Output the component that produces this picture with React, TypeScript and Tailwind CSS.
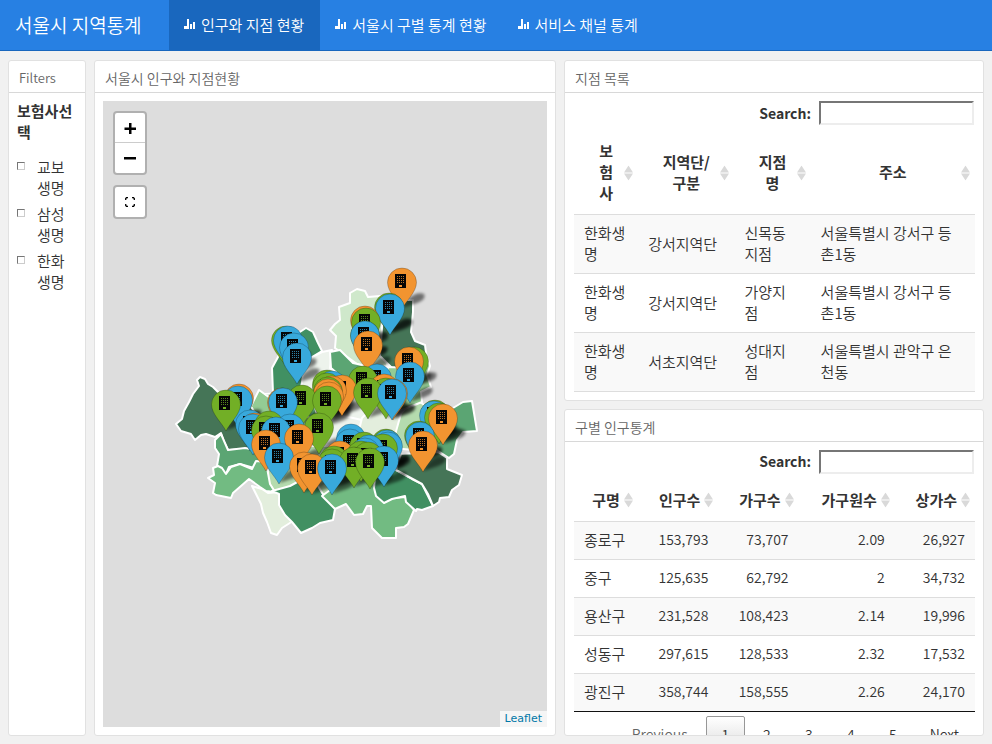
import type { ReactNode } from "react";

const FONT = "font-['Noto_Sans_CJK_KR',sans-serif]";

const navItems = [
  { label: "인구와 지점 현황", active: true },
  { label: "서울시 구별 통계 현황", active: false },
  { label: "서비스 채널 통계", active: false },
];

const insurers = ["교보생명", "삼성생명", "한화생명"];

const branches = [
  ["한화생명", "강서지역단", "신목동지점", "서울특별시 강서구 등촌1동"],
  ["한화생명", "강서지역단", "가양지점", "서울특별시 강서구 등촌1동"],
  ["한화생명", "서초지역단", "성대지점", "서울특별시 관악구 은천동"],
];

const population = [
  ["종로구", "153,793", "73,707", "2.09", "26,927"],
  ["중구", "125,635", "62,792", "2", "34,732"],
  ["용산구", "231,528", "108,423", "2.14", "19,996"],
  ["성동구", "297,615", "128,533", "2.32", "17,532"],
  ["광진구", "358,744", "158,555", "2.26", "24,170"],
];

const districts: [string, string][] = [
  ["#edf3ec", "320,415 340,400 365,418 360,440 335,448 315,440"],
  ["#edf3ec", "322,352 332,350 330,368 345,380 352,398 320,398 298,392 303,370 312,357"],
  ["#edf3ec", "312,400 355,392 380,404 362,420 335,414 318,420"],
  ["#94cc94", "250,408 259,390 273,400 290,410 318,418 318,440 298,436 262,425"],
  ["#5ba573", "265,394 298,392 314,402 318,420 290,412"],
  ["#b5dbae", "255,425 275,425 300,432 292,450 272,484 266,470 256,450"],
  ["#b5dbae", "268,466 294,446 335,446 348,470 326,496 304,484 290,488 275,492 268,482"],
  ["#457557", "176,424 182,419 184,411 189,402 193,394 199,386 197,380 200,377 205,379 208,384 213,387 219,393 236,394 252,408 262,425 256,448 245,449 228,450 224,442 221,433 215,437 206,434 201,435 195,440 191,434 181,431"],
  ["#5ba573", "215,440 221,434 228,450 245,448 256,450 262,460 254,468 240,464 229,467 226,474 217,466 219,454 215,448"],
  ["#72bb82", "208,478 214,475 213,468 218,466 222,468 226,474 231,467 240,464 252,469 256,461 266,462 270,484 275,492 266,491 260,487 249,479 241,486 233,493 231,498 216,495 213,493 215,483"],
  ["#e3eedd", "252,486 262,489 268,493 279,492 279,503 284,512 290,518 293,521 282,528 277,535 271,533 267,522 263,513 261,504 256,494"],
  ["#419062", "272,491 290,486 301,480 308,484 318,486 324,496 332,497 335,509 333,520 320,523 312,528 301,533 292,522 285,515 279,505 279,494"],
  ["#72bb82", "322,496 330,490 345,472 376,480 376,492 384,502 393,498 406,497 409,503 414,510 408,524 404,527 396,528 396,538 382,538 372,528 371,506 367,506 363,514 354,515 346,504 335,509"],
  ["#419062", "374,488 376,468 396,470 412,479 422,484 428,496 433,506 422,510 417,509 416,511 406,502 405,496 392,499 384,503 376,496"],
  ["#457557", "396,470 401,454 438,452 447,458 447,469 462,475 459,485 452,490 449,497 440,498 439,502 433,506 428,494 422,484 409,477"],
  ["#5ba573", "432,417 453,408 463,402 472,401 477,431 463,432 457,440 454,454 449,458 438,451 428,440"],
  ["#b5dbae", "395,420 415,398 428,408 430,430 425,451 392,448"],
  ["#e3eedd", "362,418 378,402 402,410 395,435 390,446 372,440 358,434"],
  ["#cfe8cb", "330,330 335,324 340,320 339,307 350,303 350,293 357,289 365,291 368,297 380,296 390,300 388,340 387,366 370,368 357,364 335,348 336,336"],
  ["#457557", "384,300 413,300 413,312 411,332 415,341 425,345 427,360 408,371 392,368 380,356"],
  ["#5ba573", "330,352 340,350 353,363 375,368 388,367 392,380 378,404 356,394 345,380 331,368"],
  ["#94cc94", "388,367 410,368 427,356 430,366 427,375 431,387 421,392 422,402 402,410 380,402"],
  ["#419062", "272,368 278,357 280,345 306,328 313,332 318,343 322,351 312,357 304,370 300,394 273,393"],
];

const O = "#f29430";
const B = "#38a9dc";
const G = "#72af26";

const pins: [number, number, string][] = [
  [402, 268, O], [389, 293, G], [390, 294, B],
  [365, 306, O], [366, 308, G], [365, 321, G], [365, 321, B], [368, 331, O],
  [286, 326, G], [288, 326, B], [294, 333, B], [297, 343, B],
  [414, 347, G], [409, 347, O], [410, 362, B],
  [377, 364, B], [363, 366, G], [327, 370, G], [332, 371, B], [327, 373, G],
  [384, 374, O], [342, 375, O], [332, 376, O], [328, 377, G], [328, 379, O],
  [386, 378, G], [368, 378, G], [393, 379, O], [392, 379, B],
  [302, 385, G], [329, 382, O], [327, 386, G],
  [239, 384, O], [238, 386, B], [226, 390, G], [282, 388, O], [283, 388, B],
  [435, 400, G], [434, 401, B], [439, 403, G], [443, 404, O],
  [250, 410, B], [255, 413, O], [253, 414, B], [269, 411, G], [266, 416, G],
  [290, 414, B], [319, 413, G], [276, 417, B], [299, 424, O],
  [419, 421, G], [420, 422, B], [423, 431, O],
  [351, 424, B], [350, 429, B], [386, 429, G], [387, 430, B], [388, 432, B], [383, 434, G],
  [266, 430, O], [364, 432, G], [369, 435, B], [365, 438, B],
  [340, 441, O], [279, 443, B], [361, 441, G], [368, 442, G],
  [334, 446, G], [384, 446, B], [332, 449, G], [354, 447, G], [370, 448, G],
  [304, 452, O], [312, 454, O], [332, 454, B],
];

const windowColumns = [-4, -2, 0, 2];
const windowRows = [8, 10, 12, 14];

function Pin({ x, y, color }: { x: number; y: number; color: string }) {
  return (
    <g transform={`translate(${x} ${y})`}>
      <path
        d="M0 41C-4 33-14.500 24-14.500 14.500A14.500 14.500 0 0 1 14.500 14.500C14.500 24 4 33 0 41Z"
        fill={color}
        stroke="#000"
        strokeOpacity="0.22"
        strokeWidth="1"
      />
      <path d="M-7 6H4V20H-7Z" fill="#050505" />
      {windowRows.map((wy) =>
        windowColumns.map((wx) => (
          <rect key={`${wx}-${wy}`} x={wx - 1} y={wy} width="1" height="1" fill={color} fillOpacity="0.75" />
        )),
      )}
      <rect x="-3" y="17" width="3" height="2" fill={color} />
    </g>
  );
}

function SeoulMap() {
  return (
    <svg
      className="absolute inset-0 h-full w-full"
      viewBox="103 101 444 626"
      preserveAspectRatio="xMidYMid slice"
      role="img"
      aria-label="서울시 지도"
    >
      <defs>
        <filter id="soft" x="-50%" y="-50%" width="200%" height="200%">
          <feGaussianBlur stdDeviation="1.6" />
        </filter>
      </defs>
      <g stroke="#fff" strokeWidth="2" strokeLinejoin="round">
        {districts.map(([fill, points]) => (
          <polygon key={points} points={points} fill={fill} />
        ))}
      </g>
      <g filter="url(#soft)" fill="#000" fillOpacity="0.5">
        {pins.map(([x, y], i) => (
          <path key={i} d={`M${x} ${y + 40}l6 -9q9 -8 16 -5q3 5 -7 9z`} />
        ))}
      </g>
      {pins.map(([x, y, color], i) => (
        <Pin key={i} x={x} y={y} color={color} />
      ))}
    </svg>
  );
}

function StatsIcon() {
  return (
    <svg width="12" height="10" viewBox="0 0 12 10" fill="currentColor" aria-hidden="true">
      <path d="M0 7h3v3H0zM3 0h2v10H3zM6 5h2v5H6zM9 3h2v7H9z" />
    </svg>
  );
}

function SortIcon() {
  return (
    <svg
      className="absolute top-1/2 right-[5px] -translate-y-1/2"
      width="9"
      height="15"
      viewBox="0 0 9 15"
      fill="#d9d9d9"
      aria-hidden="true"
    >
      <path d="M4.500 0L9 7H0zM0 8h9L4.500 15z" />
    </svg>
  );
}

interface CardProps {
  title: string;
  titleSize?: string;
  className?: string;
  children: ReactNode;
}

function Card({ title, titleSize = "text-[14px]", className = "", children }: CardProps) {
  return (
    <section
      className={`flex min-h-0 min-w-0 flex-col overflow-hidden rounded-[3px] border border-[#e1e1e1] bg-white ${className}`}
    >
      <h2
        className={`h-8 shrink-0 border-b border-[#d8d8d8] px-[10px] leading-[34px] font-[350] text-[#666] ${titleSize}`}
      >
        {title}
      </h2>
      <div className="flex min-h-0 flex-1 flex-col overflow-hidden p-2">{children}</div>
    </section>
  );
}

function Search({ id }: { id: string }) {
  return (
    <div className="mb-[6px] flex shrink-0 items-center justify-end gap-2 pr-px">
      <label htmlFor={id} className="pb-px text-[14px] leading-[22px] font-bold">
        Search:
      </label>
      <input
        id={id}
        type="search"
        className="h-6 w-[155px] appearance-none border-2 border-t-[#767676] border-r-[#ededed] border-b-[#ededed] border-l-[#767676] bg-white px-1 outline-none"
      />
    </div>
  );
}

export default function App() {
  return (
    <div className={`flex h-screen flex-col bg-[#f1f1f1] text-[15px] leading-[21px] font-[350] text-[#333] ${FONT}`}>
      <nav className="flex h-[51px] shrink-0 items-stretch border-b border-[#1967be] bg-[#2780e3] text-white">
        <a href="#top" className="mr-[10px] flex w-[159px] items-center pb-[2px] pl-[15px] text-[19px]">
          서울시 지역통계
        </a>
        {navItems.map((item) => (
          <a
            key={item.label}
            href="#page"
            className={`flex items-center gap-[5px] pr-4 pb-[2px] pl-[15px] ${item.active ? "bg-[#1967be]" : ""}`}
          >
            <StatsIcon />
            <span>{item.label}</span>
          </a>
        ))}
      </nav>

      <main className="grid min-h-0 flex-1 grid-cols-[78fr_462fr_420fr] gap-2 px-2 pt-[9px] pb-2">
        <Card title="Filters" titleSize="text-[13px]">
          <fieldset className="-mt-px">
            <legend className="mb-[14px] font-bold break-all">보험사선택</legend>
            <div className="flex flex-col gap-[5px]">
              {insurers.map((name) => (
                <label key={name} className="flex gap-3 pr-2 break-all">
                  <input
                    type="checkbox"
                    className="mt-[6px] h-2 w-2 shrink-0 appearance-none border border-t-[#767676] border-r-[#ccc] border-b-[#ccc] border-l-[#767676] bg-white"
                  />
                  <span>{name}</span>
                </label>
              ))}
            </div>
          </fieldset>
        </Card>

        <Card title="서울시 인구와 지점현황">
          <div className="relative flex-1 overflow-hidden bg-[#ddd]">
            <SeoulMap />
            <div className="absolute top-[10px] left-[10px] flex flex-col gap-[10px]">
              <div className="flex flex-col rounded border-2 border-black/20 bg-white bg-clip-padding text-black">
                <button
                  aria-label="Zoom in"
                  className="flex h-[30px] w-[30px] items-center justify-center border-b border-[#ccc]"
                >
                  <svg width="12" height="12" viewBox="0 0 12 12" aria-hidden="true">
                    <path d="M5 1h2.500v4.500H12V8H7.500v4.500H5V8H0.500V5.500H5z" />
                  </svg>
                </button>
                <button aria-label="Zoom out" className="flex h-[30px] w-[30px] items-center justify-center">
                  <svg width="12" height="12" viewBox="0 0 12 12" aria-hidden="true">
                    <path d="M0 5h12v2.500H0z" />
                  </svg>
                </button>
              </div>
              <button
                aria-label="Full screen"
                className="flex h-[34px] w-[34px] items-center justify-center rounded border-2 border-black/20 bg-white bg-clip-padding text-black"
              >
                <svg width="10" height="10" viewBox="0 0 10 10" fill="none" stroke="#000" strokeWidth="1.3" aria-hidden="true">
                  <path d="M0.700 3V1.500L1.500 0.700H3M7 0.700h1.500l0.800 0.800V3M9.300 7v1.500l-0.800 0.800H7M3 9.300H1.500l-0.800 -0.800V7" />
                </svg>
              </button>
            </div>
            <div className="absolute right-0 bottom-0 bg-white/70 px-[5px] font-['DejaVu_Sans',sans-serif] text-[11px] leading-4 font-normal text-[#0078a8]">
              <a href="#leaflet">Leaflet</a>
            </div>
          </div>
        </Card>

        <div className="flex min-h-0 min-w-0 flex-col gap-2">
          <Card title="지점 목록" className="grow-[341] basis-0">
            <Search id="branch-search" />
            <div className="ml-px min-h-0 flex-1">
              <table className="w-full table-fixed border-b border-[#ddd] break-all">
                <colgroup>
                  <col className="w-[16%]" />
                  <col className="w-[24%]" />
                  <col className="w-[19%]" />
                  <col className="w-[41%]" />
                </colgroup>
                <thead>
                  <tr>
                    {["보험사", "지역단/구분", "지점명", "주소"].map((h) => (
                      <th key={h} className="relative px-5 pt-[9px] pb-[11px] font-bold">
                        {h}
                        <SortIcon />
                      </th>
                    ))}
                  </tr>
                </thead>
                <tbody>
                  {branches.map((row) => (
                    <tr key={row[2]} className="border-t border-[#ddd] odd:bg-[#f9f9f9]">
                      {row.map((cell, i) => (
                        <td key={i} className={`pt-[7px] pb-[9px] pl-[10px] ${i === 2 ? "pr-5" : "pr-[10px]"}`}>
                          {cell}
                        </td>
                      ))}
                    </tr>
                  ))}
                </tbody>
              </table>
            </div>
          </Card>

          <Card title="구별 인구통계" className="grow-[327] basis-0">
            <Search id="district-search" />
            <div className="ml-px min-h-0 flex-1">
              <table className="w-full table-fixed border-b border-[#111]">
                <colgroup>
                  <col className="w-[16%]" />
                  <col className="w-[20%]" />
                  <col className="w-[20%]" />
                  <col className="w-[24%]" />
                  <col className="w-[20%]" />
                </colgroup>
                <thead>
                  <tr>
                    {["구명", "인구수", "가구수", "가구원수", "상가수"].map((h, i) => (
                      <th
                        key={h}
                        className={`relative px-[18px] pt-[9px] pb-[11px] font-bold whitespace-nowrap ${i ? "text-right" : "text-center"}`}
                      >
                        {h}
                        <SortIcon />
                      </th>
                    ))}
                  </tr>
                </thead>
                <tbody>
                  {population.map((row) => (
                    <tr key={row[0]} className="border-t border-[#ddd] odd:bg-[#f9f9f9]">
                      {row.map((cell, i) => (
                        <td key={i} className={`px-[10px] pt-[7px] pb-[9px] ${i ? "text-right text-[14px]" : ""}`}>
                          {cell}
                        </td>
                      ))}
                    </tr>
                  ))}
                </tbody>
              </table>
              <div className="flex justify-end gap-[2px] pt-1 text-[14px] leading-[21px]">
                <button className="px-4 py-2 text-[#666]">Previous</button>
                <button className="w-[39px] rounded-[2px] border border-[#979797] bg-gradient-to-b from-white to-[#dcdcdc] py-[7px]">
                  1
                </button>
                {["2", "3", "4", "5"].map((n) => (
                  <button key={n} className="w-[40px] py-2">
                    {n}
                  </button>
                ))}
                <button className="py-2 pr-4 pl-[15px]">Next</button>
              </div>
            </div>
          </Card>
        </div>
      </main>
    </div>
  );
}
